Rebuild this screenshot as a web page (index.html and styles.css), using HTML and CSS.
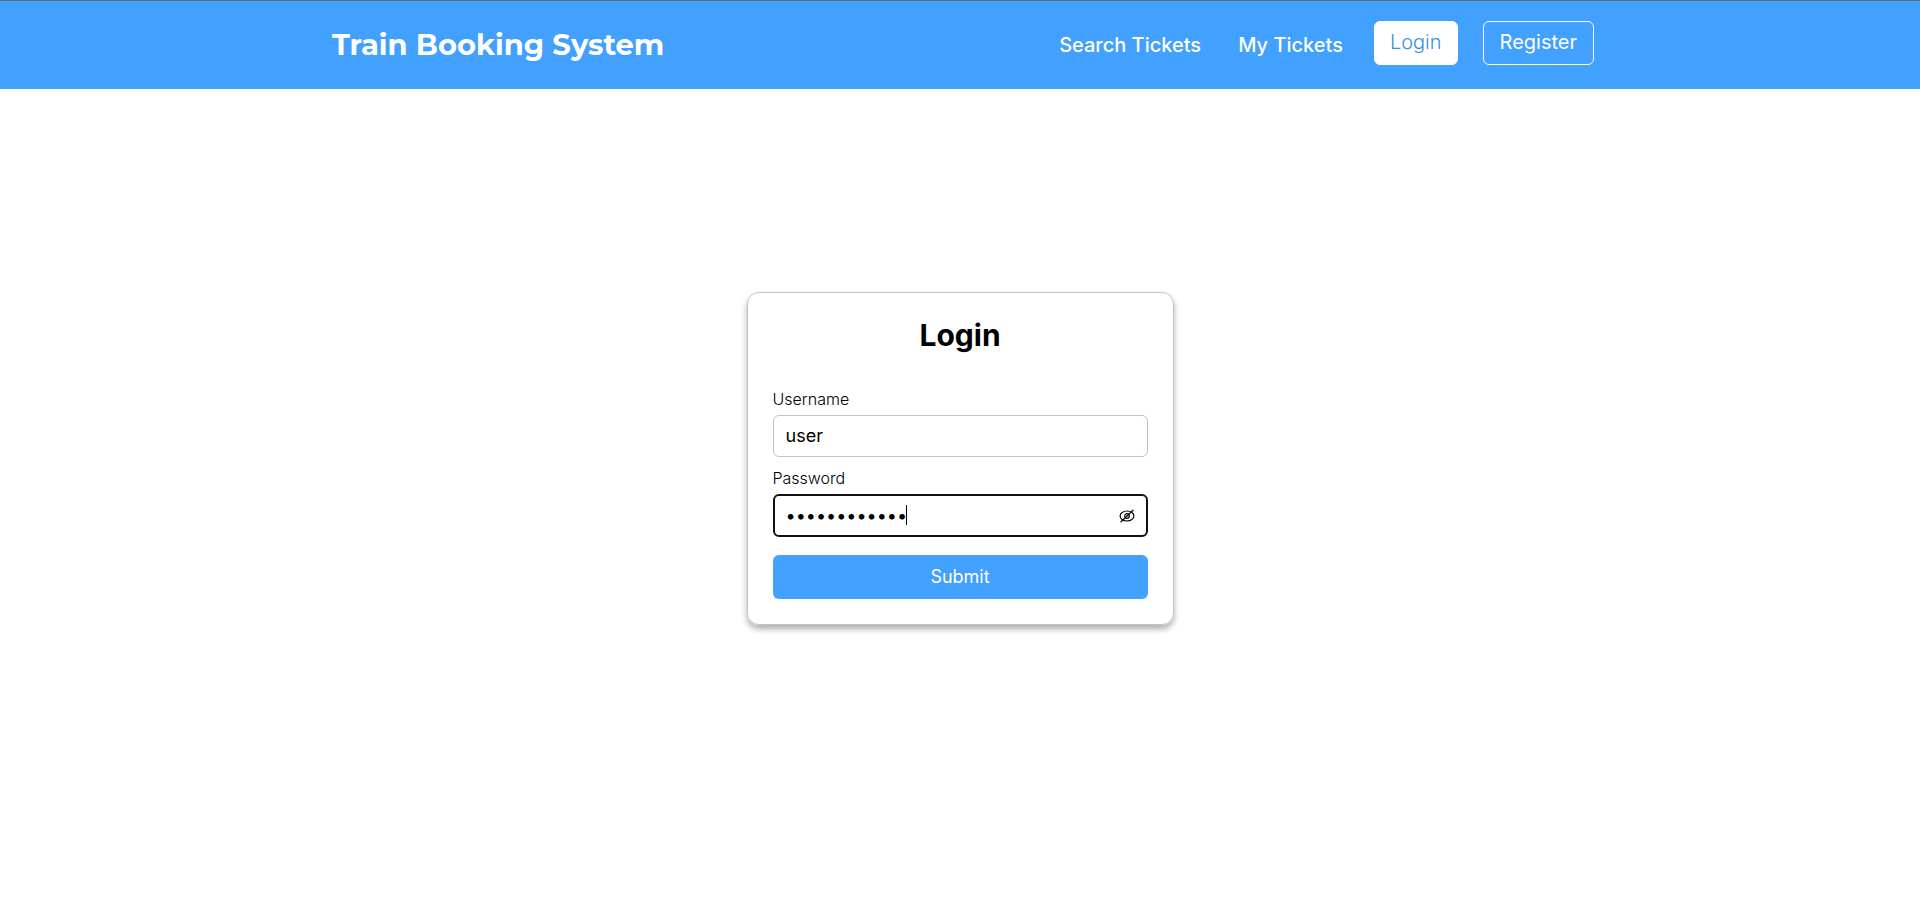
FILE: index.html
```html
<!DOCTYPE html>
<html lang="en">
<head>
<meta charset="utf-8">
<meta name="viewport" content="width=device-width, initial-scale=1">
<title>Train Booking System</title>
<link rel="stylesheet" href="styles.css">
</head>
<body>
<header class="site-header">
  <div class="header-inner">
    <a class="brand" href="#">Train Booking System</a>
    <nav class="nav">
      <div class="nav-links">
        <a class="nav-link" href="#">Search Tickets</a>
        <a class="nav-link" href="#">My Tickets</a>
      </div>
      <div class="nav-actions">
        <button class="btn btn-login" type="button">Login</button>
        <button class="btn btn-register" type="button">Register</button>
      </div>
    </nav>
  </div>
</header>
<main class="main">
  <form class="card">
    <h1 class="card-title">Login</h1>
    <div class="field">
      <label class="label" for="username">Username</label>
      <input class="input" id="username" type="text" value="user">
    </div>
    <div class="field">
      <label class="label" for="password">Password</label>
      <div class="password">
        <input class="input input-active" id="password" type="password" value="trainbooking">
        <span class="caret"></span>
        <button class="toggle" type="button" aria-label="Show password">
          <svg width="16" height="16" viewBox="0 0 16 16" fill="none" stroke="#000" stroke-width="1.2" stroke-linecap="round">
            <ellipse cx="8" cy="8" rx="6.900" ry="5"/>
            <circle cx="8" cy="8" r="2.300"/>
            <path d="M2 13.800 14 2.200"/>
          </svg>
        </button>
      </div>
    </div>
    <button class="submit" type="submit">Submit</button>
  </form>
</main>
</body>
</html>
```
FILE: styles.css
```css
* {
  box-sizing: border-box;
}

body {
  margin: 0;
  min-height: 100vh;
  display: flex;
  flex-direction: column;
  background: #fff;
  color: #000;
  font-family: Inter, "Liberation Sans", sans-serif;
}

button,
input {
  font-family: inherit;
}

.site-header {
  background: #42a0ff;
  border-top: 1px solid #666;
}

.header-inner {
  display: flex;
  justify-content: space-between;
  align-items: flex-start;
  max-width: 1268px;
  margin: 0 auto;
  padding: 20px 0;
}

.brand {
  padding-left: 6px;
  color: #fff;
  font-family: Montserrat, Lato, sans-serif;
  font-size: 29px;
  font-weight: 700;
  line-height: 48px;
  text-decoration: none;
}

.nav {
  display: flex;
  align-items: flex-start;
  gap: 31px;
}

.nav-links {
  display: flex;
  gap: 37px;
}

.nav-link {
  color: #fff;
  font-size: 20px;
  font-weight: 500;
  line-height: 48px;
  text-decoration: none;
}

.nav-actions {
  display: flex;
  gap: 25px;
}

.btn {
  height: 44px;
  padding: 0 15px 2px;
  border: 1px solid #fff;
  border-radius: 6px;
  font-size: 20px;
}

.btn-login {
  background: #fff;
  color: #3c8fe4;
  font-weight: 300;
}

.btn-register {
  padding: 0 16px 2px;
  background: transparent;
  color: #fff;
  font-weight: 400;
}

.main {
  flex: 1;
  display: flex;
  justify-content: center;
  align-items: flex-start;
  padding: 203px 16px 32px;
}

.card {
  display: flex;
  flex-direction: column;
  width: 100%;
  max-width: 427px;
  padding: 24px 25px 25px;
  border: 1px solid #c4c4c4;
  border-radius: 12px;
  box-shadow: 0 4px 6px rgba(0, 0, 0, 0.32);
}

.card-title {
  margin: 0 0 34px;
  font-size: 30px;
  font-weight: 700;
  line-height: 36px;
  text-align: center;
}

.field {
  display: flex;
  flex-direction: column;
  gap: 4px;
  margin-bottom: 9px;
}

.label {
  font-size: 16px;
  font-weight: 300;
  line-height: 24px;
}

.input {
  width: 100%;
  height: 42px;
  padding: 0 12px 2px;
  border: 1px solid #c4c4c4;
  border-radius: 6px;
  background: #fff;
  color: #000;
  font-size: 18px;
  outline: none;
}

.password {
  position: relative;
}

.input-active {
  display: block;
  height: 43px;
  padding: 0 11px;
  border: 2px solid #111;
}

.caret {
  position: absolute;
  top: 11px;
  left: 133px;
  width: 1px;
  height: 20px;
  background: #000;
}

.toggle {
  position: absolute;
  top: 14px;
  right: 13px;
  display: flex;
  padding: 0;
  border: 0;
  background: none;
}

.submit {
  height: 44px;
  margin-top: 9px;
  padding-bottom: 3px;
  border: 0;
  border-radius: 6px;
  background: #42a0ff;
  color: #fff;
  font-size: 18px;
}
```
